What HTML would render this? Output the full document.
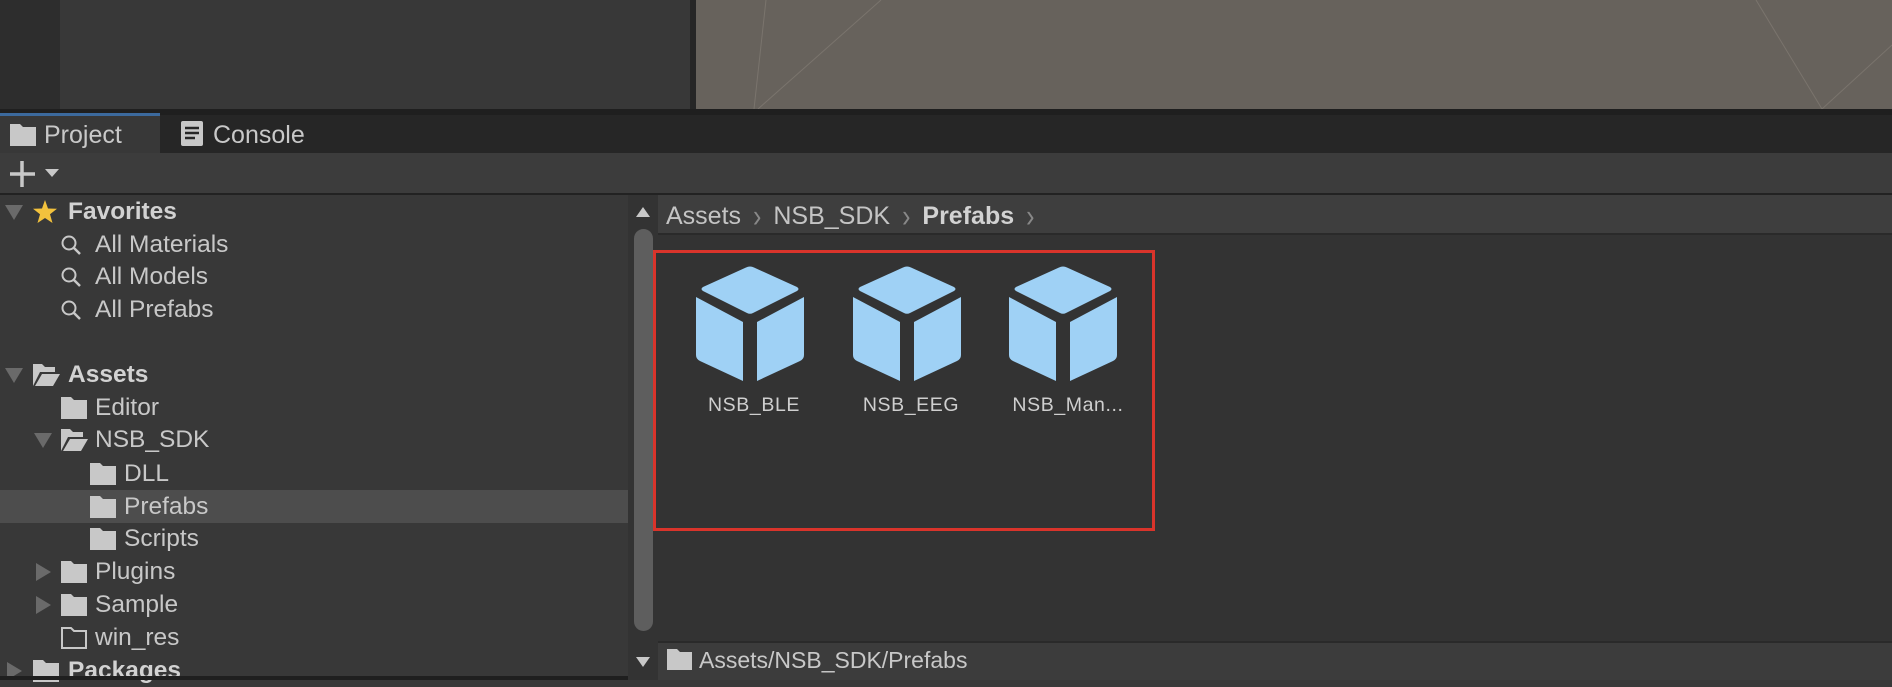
<!DOCTYPE html>
<html><head><meta charset="utf-8"><style>
*{margin:0;padding:0;box-sizing:border-box}
body{width:1892px;height:680px;overflow:hidden;background:#383838;font-family:"Liberation Sans",sans-serif;color:#c8c8c8;position:relative}
.a{position:absolute}
.row{position:absolute;left:0;width:628px;height:33px;font-size:24.5px;line-height:33px;white-space:nowrap}
.row span{position:absolute}
.tri{width:0;height:0;border-left:9px solid transparent;border-right:9px solid transparent;border-top:15px solid #6a6a6a;position:absolute;top:10px}
.trir{width:0;height:0;border-top:9px solid transparent;border-bottom:9px solid transparent;border-left:15px solid #6a6a6a;position:absolute;top:8px}
.lbl{position:absolute;font-size:19.5px;letter-spacing:0.6px;color:#cfcfcf;width:170px;text-align:center;top:394px}
.ch{color:#888;margin:0 12px;display:inline-block;transform:scaleY(1.3)}
</style></head><body>
<div class="a" style="left:0;top:0;width:60px;height:110px;background:#2d2d2d"></div>
<div class="a" style="left:60px;top:0;width:630px;height:110px;background:#383838"></div>
<div class="a" style="left:690px;top:0;width:6px;height:110px;background:#262626"></div>
<div class="a" style="left:696px;top:0;width:1196px;height:109px;background:#67625c"></div>
<svg class="a" style="left:696px;top:0" width="1196" height="110"><g stroke="#7a746d" stroke-width="1" fill="none"><line x1="62" y1="109" x2="185" y2="0"/><line x1="58" y1="109" x2="70" y2="0"/><line x1="1126" y1="109" x2="1060" y2="0"/><line x1="1126" y1="109" x2="1196" y2="45"/></g></svg>
<div class="a" style="left:0;top:109px;width:1892px;height:6px;background:#1f1f1f"></div>
<div class="a" style="left:0;top:115px;width:1892px;height:38px;background:#262626"></div>
<div class="a" style="left:0;top:113px;width:160px;height:40px;background:#383838;border-top:3px solid #3c6a9e"></div>
<svg class="a" style="left:10px;top:124px" width="26" height="22"><path d="M0 0H10L13 3H26V22H0Z" fill="#c8c8c8"/></svg>
<div class="a" style="left:44px;top:118px;font-size:25px;line-height:34px">Project</div>
<svg class="a" style="left:181px;top:121px" width="22" height="25"><rect width="22" height="25" rx="2" fill="#c8c8c8"/><g stroke="#262626" stroke-width="2.5"><line x1="4" y1="7" x2="18" y2="7"/><line x1="4" y1="12" x2="18" y2="12"/><line x1="4" y1="17" x2="14" y2="17"/></g></svg>
<div class="a" style="left:213px;top:118px;font-size:25px;line-height:34px">Console</div>
<div class="a" style="left:0;top:153px;width:1892px;height:40px;background:#3c3c3c"></div>
<svg class="a" style="left:10px;top:161px" width="50" height="26"><path d="M12 0V26M0 13H25" stroke="#c8c8c8" stroke-width="3.5"/><path d="M35 8H49L42 16Z" fill="#c8c8c8"/></svg>
<div class="a" style="left:0;top:193px;width:1892px;height:2px;background:#222"></div>
<div class="a" style="left:0;top:490px;width:628px;height:33px;background:#4d4d4d"></div>
<div class="row" style="top:195px"><div class="tri" style="left:5px"></div>
<svg class="a" style="left:33px;top:5px" width="24" height="23"><path d="M12 0L15 8.5L24 8.8L17 14.3L19.5 23L12 18L4.5 23L7 14.3L0 8.8L9 8.5Z" fill="#f3c23d"/></svg>
<span style="left:68px;font-weight:bold;color:#d2d2d2">Favorites</span></div>
<div class="row" style="top:228px"><svg class="a" style="left:61px;top:7px" width="22" height="22"><circle cx="8" cy="8" r="6.5" stroke="#c8c8c8" stroke-width="2" fill="none"/><line x1="13" y1="13" x2="19" y2="19" stroke="#c8c8c8" stroke-width="2.5"/></svg><span style="left:95px">All Materials</span></div>
<div class="row" style="top:260px"><svg class="a" style="left:61px;top:7px" width="22" height="22"><circle cx="8" cy="8" r="6.5" stroke="#c8c8c8" stroke-width="2" fill="none"/><line x1="13" y1="13" x2="19" y2="19" stroke="#c8c8c8" stroke-width="2.5"/></svg><span style="left:95px">All Models</span></div>
<div class="row" style="top:293px"><svg class="a" style="left:61px;top:7px" width="22" height="22"><circle cx="8" cy="8" r="6.5" stroke="#c8c8c8" stroke-width="2" fill="none"/><line x1="13" y1="13" x2="19" y2="19" stroke="#c8c8c8" stroke-width="2.5"/></svg><span style="left:95px">All Prefabs</span></div>
<div class="row" style="top:358px"><div class="tri" style="left:5px"></div>
<svg class="a" style="left:33px;top:6px" width="27" height="22"><path d="M0 22V0H9L12 3H22V8H7L0 22ZM2 22L9 10H27L20 22Z" fill="#c8c8c8"/></svg>
<span style="left:68px;font-weight:bold;color:#d2d2d2">Assets</span></div>
<div class="row" style="top:391px"><svg class="a" style="left:61px;top:6px" width="26" height="22"><path d="M0 0H10L13 3H26V22H0Z" fill="#c8c8c8"/></svg><span style="left:95px">Editor</span></div>
<div class="row" style="top:423px"><div class="tri" style="left:34px"></div><svg class="a" style="left:61px;top:6px" width="27" height="22"><path d="M0 22V0H9L12 3H22V8H7L0 22ZM2 22L9 10H27L20 22Z" fill="#c8c8c8"/></svg><span style="left:95px">NSB_SDK</span></div>
<div class="row" style="top:457px"><svg class="a" style="left:90px;top:6px" width="26" height="22"><path d="M0 0H10L13 3H26V22H0Z" fill="#c8c8c8"/></svg><span style="left:124px">DLL</span></div>
<div class="row" style="top:490px"><svg class="a" style="left:90px;top:6px" width="26" height="22"><path d="M0 0H10L13 3H26V22H0Z" fill="#c8c8c8"/></svg><span style="left:124px">Prefabs</span></div>
<div class="row" style="top:522px"><svg class="a" style="left:90px;top:6px" width="26" height="22"><path d="M0 0H10L13 3H26V22H0Z" fill="#c8c8c8"/></svg><span style="left:124px">Scripts</span></div>
<div class="row" style="top:555px"><div class="trir" style="left:36px"></div><svg class="a" style="left:61px;top:6px" width="26" height="22"><path d="M0 0H10L13 3H26V22H0Z" fill="#c8c8c8"/></svg><span style="left:95px">Plugins</span></div>
<div class="row" style="top:588px"><div class="trir" style="left:36px"></div><svg class="a" style="left:61px;top:6px" width="26" height="22"><path d="M0 0H10L13 3H26V22H0Z" fill="#c8c8c8"/></svg><span style="left:95px">Sample</span></div>
<div class="row" style="top:621px"><svg class="a" style="left:61px;top:6px" width="26" height="22"><path d="M1 1H10L13 4H25V21H1Z" fill="none" stroke="#c8c8c8" stroke-width="2"/></svg><span style="left:95px">win_res</span></div>
<div class="row" style="top:654px"><div class="trir" style="left:7px"></div><svg class="a" style="left:33px;top:6px" width="26" height="22"><path d="M0 0H10L13 3H26V22H0Z" fill="#c8c8c8"/></svg><span style="left:68px;font-weight:bold;color:#d2d2d2">Packages</span></div>
<div class="a" style="left:0;top:676px;width:658px;height:4px;background:#1f1f1f"></div>
<div class="a" style="left:628px;top:195px;width:30px;height:485px;background:#333"></div>
<div class="a" style="left:634px;top:229px;width:19px;height:402px;border-radius:10px;background:#5e5e5e"></div>
<svg class="a" style="left:634px;top:205px" width="18" height="14"><path d="M2 12H16L9 2Z" fill="#c8c8c8"/></svg>
<svg class="a" style="left:634px;top:655px" width="18" height="14"><path d="M2 2H16L9 12Z" fill="#c8c8c8"/></svg>
<div class="a" style="left:658px;top:195px;width:1234px;height:485px;background:#333333"></div>
<div class="a" style="left:658px;top:195px;width:1234px;height:40px;background:#3e3e3e;border-bottom:2px solid #2a2a2a"></div>
<div class="a" style="left:666px;top:199px;font-size:25px;line-height:34px;color:#c4c4c4;white-space:nowrap">Assets<span class="ch">&#x203A;</span>NSB_SDK<span class="ch">&#x203A;</span><b style="color:#d2d2d2">Prefabs</b><span class="ch">&#x203A;</span></div>
<div class="a" style="left:653px;top:250px;width:502px;height:281px;border:3px solid #d9342b"></div>
<svg width="0" height="0" style="position:absolute"><defs><g id="cube"><path d="M50 1.5Q54 -0.5 58 1.5L101 21Q104 23 101 25L57 47Q54 48.5 51 47L7 25Q4 23 7 21Z" fill="#9fd1f5"/><path d="M0 31L47 56V115L4 95Q0 93 0 89Z" fill="#9fd1f5"/><path d="M108 31L61 56V115L104 95Q108 93 108 89Z" fill="#9fd1f5"/></g></defs></svg>
<svg class="a" style="left:696px;top:266px" width="108" height="116"><use href="#cube"/></svg>
<svg class="a" style="left:853px;top:266px" width="108" height="116"><use href="#cube"/></svg>
<svg class="a" style="left:1009px;top:266px" width="108" height="116"><use href="#cube"/></svg>
<div class="lbl" style="left:669px">NSB_BLE</div>
<div class="lbl" style="left:826px">NSB_EEG</div>
<div class="lbl" style="left:983px">NSB_Man...</div>
<div class="a" style="left:658px;top:641px;width:1234px;height:39px;background:#3c3c3c;border-top:2px solid #2a2a2a"></div>
<svg class="a" style="left:667px;top:649px" width="25" height="21"><path d="M0 0H10L13 3H25V21H0Z" fill="#c8c8c8"/></svg>
<div class="a" style="left:699px;top:643px;font-size:23px;line-height:34px;color:#c8c8c8">Assets/NSB_SDK/Prefabs</div>
</body></html>
